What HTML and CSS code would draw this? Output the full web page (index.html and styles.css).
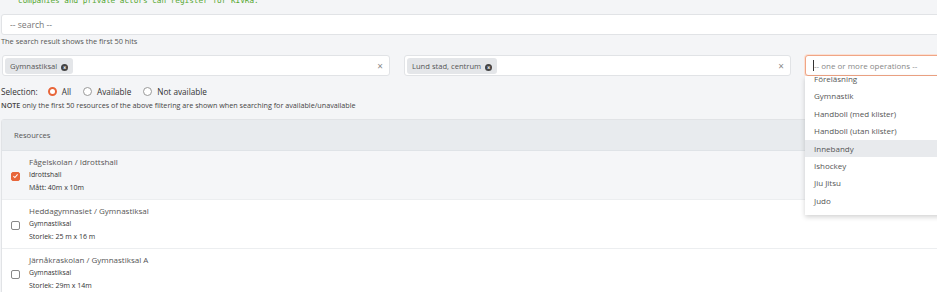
FILE: index.html
```html
<!DOCTYPE html>
<html lang="sv">
<head>
    <meta charset="UTF-8">
    <meta name="viewport" content="width=device-width, initial-scale=1.0">
    <title>Resurser</title>
    <link rel="stylesheet" href="styles.css">
</head>
<body>
    <div class="page">
        <p class="intro"><code>companies and private actors can register for KIVRa.</code></p>

        <input class="search" type="text" placeholder="-- search --">
        <div class="hint">The search result shows the first 50 hits</div>

        <div class="filters">
            <div class="select">
                <span class="tag">Gymnastiksal <span class="tag-x">&#x2716;</span></span>
                <span class="clear">&times;</span>
            </div>
            <div class="select">
                <span class="tag">Lund stad, centrum <span class="tag-x">&#x2716;</span></span>
                <span class="clear">&times;</span>
            </div>
            <div class="select-wrap">
                <div class="select focused">
                    <span class="caret"></span><span class="placeholder">-- one or more operations --</span>
                </div>
                <ul class="dropdown">
                    <li class="cut">Föreläsning</li>
                    <li>Gymnastik</li>
                    <li>Handboll (med klister)</li>
                    <li>Handboll (utan klister)</li>
                    <li class="hover">Innebandy</li>
                    <li>Ishockey</li>
                    <li>Jiu Jitsu</li>
                    <li>Judo</li>
                    <li>Karate</li>
                </ul>
            </div>
        </div>

        <div class="selection">
            <span class="sel-label">Selection:</span>
            <label><span class="radio checked"></span>All</label>
            <label><span class="radio"></span>Available</label>
            <label><span class="radio"></span>Not available</label>
        </div>
        <div class="note"><b>NOTE</b> only the first 50 resources of the above filtering are shown when searching for available/unavailable</div>

        <div class="card">
            <div class="card-head">Resources</div>
            <div class="res selected">
                <span class="check on"><svg viewBox="0 0 10 10" width="8" height="8"><path d="M2 5.2 L4.1 7.2 L8 2.8" fill="none" stroke="#fff" stroke-width="1.5"/></svg></span>
                <div class="res-info">
                    <div class="res-title">Fågelskolan / Idrottshall</div>
                    <div class="res-type">Idrottshall</div>
                    <div class="res-size">Mått: 40m x 10m</div>
                </div>
            </div>
            <div class="res">
                <span class="check"></span>
                <div class="res-info">
                    <div class="res-title">Heddagymnasiet / Gymnastiksal</div>
                    <div class="res-type">Gymnastiksal</div>
                    <div class="res-size">Storlek: 25 m x 16 m</div>
                </div>
            </div>
            <div class="res">
                <span class="check"></span>
                <div class="res-info">
                    <div class="res-title">Järnåkraskolan / Gymnastiksal A</div>
                    <div class="res-type">Gymnastiksal</div>
                    <div class="res-size">Storlek: 29m x 14m</div>
                </div>
            </div>
        </div>
    </div>
</body>
</html>
```

FILE: styles.css
```css
body {
    margin: 0;
    padding: 0;
    background-color: #f4f5f7;
    font-family: "Open Sans", Arial, sans-serif;
    color: #444;
    overflow: hidden;
}
.page {
    width: 1192px;
    padding-left: 1px;
}
.intro {
    margin: -14px 0 0 17px;
    height: 28px;
}
.intro code {
    font-family: "DejaVu Sans Mono", monospace;
    font-size: 7.7px;
    color: #56a832;
}
.search {
    display: block;
    box-sizing: border-box;
    width: 100%;
    height: 21px;
    margin: 0;
    padding: 0 8px;
    border: 1px solid #e1e3e6;
    border-radius: 3px;
    background: #fff;
    font-family: inherit;
    font-size: 8.6px;
}
.search::placeholder {
    color: #777;
}
.hint {
    font-size: 7.4px;
    color: #555;
    margin-top: 1px;
    height: 19px;
}
.filters {
    display: grid;
    grid-template-columns: 388px 387px 387px;
    column-gap: 14px;
    padding-left: 1px;
}
.select {
    box-sizing: border-box;
    height: 21px;
    display: flex;
    align-items: center;
    padding: 0 2px;
    border: 1px solid #e1e3e6;
    border-radius: 3px;
    background: #fff;
    font-size: 7.6px;
}
.select.focused {
    border-color: #f0a585;
    box-shadow: 0 0 0 1px #fbe0d4;
    padding-left: 7px;
    font-size: 8px;
}
.select-wrap {
    position: relative;
}
.tag {
    background: #e4e6e9;
    border-radius: 3px;
    padding: 3px 5px 3px 5px;
    color: #555;
}
.tag-x {
    display: inline-block;
    width: 7px;
    height: 7px;
    line-height: 7px;
    border-radius: 50%;
    background: #444;
    color: #e4e6e9;
    font-size: 4px;
    text-align: center;
    margin-left: 2px;
    vertical-align: 0;
}
.clear {
    margin-left: auto;
    margin-right: 4px;
    color: #888;
    font-size: 10px;
}
.caret {
    width: 1px;
    height: 11px;
    background: #333;
}
.placeholder {
    color: #888;
}
.dropdown {
    position: absolute;
    left: 0;
    top: 21px;
    width: 100%;
    height: 139px;
    overflow: hidden;
    margin: 0;
    padding: 0;
    list-style: none;
    background: #fff;
    box-shadow: 0 2px 5px rgba(0, 0, 0, 0.18);
    font-size: 8px;
    color: #555;
    z-index: 2;
}
.dropdown li {
    height: 17.4px;
    line-height: 17.4px;
    padding-left: 9px;
}
.dropdown li.cut {
    margin-top: -6px;
}
.dropdown li.hover {
    background: #e8eaed;
}
.selection {
    display: flex;
    align-items: center;
    margin-top: 10px;
    font-size: 8.2px;
    color: #333;
    height: 11px;
}
.sel-label {
    margin-right: 10px;
}
.selection label {
    display: flex;
    align-items: center;
    margin-right: 12px;
}
.radio {
    box-sizing: border-box;
    width: 9px;
    height: 9px;
    border: 1px solid #999;
    border-radius: 50%;
    background: #fff;
    margin-right: 5px;
}
.radio.checked {
    border: 2.5px solid #e8663a;
}
.note {
    font-size: 7.2px;
    color: #444;
    margin-top: 3px;
    height: 19px;
}
.note b {
    font-weight: 600;
}
.card {
    border: 1px solid #e1e3e6;
    border-radius: 3px;
    background: #fff;
}
.card-head {
    background: #e8ebee;
    height: 30px;
    line-height: 30px;
    padding-left: 12px;
    font-size: 7.6px;
    color: #555;
    border-bottom: 1px solid #dfe3e7;
}
.res {
    display: flex;
    align-items: center;
    height: 48px;
    border-bottom: 1px solid #eceef0;
    padding-left: 9px;
}
.res.selected {
    background: #f5f6f8;
}
.check {
    box-sizing: border-box;
    width: 9px;
    height: 9px;
    border: 1px solid #888;
    border-radius: 2px;
    background: #fff;
    margin-right: 9px;
    margin-top: 2px;
    display: flex;
    align-items: center;
    justify-content: center;
}
.check.on {
    background: #e8663a;
    border-color: #e8663a;
}
.res-title {
    font-size: 8px;
    color: #555;
    line-height: 12px;
}
.res-type {
    font-size: 6.8px;
    color: #333;
    line-height: 13px;
}
.res-size {
    font-size: 7px;
    color: #333;
    line-height: 13px;
}
```
